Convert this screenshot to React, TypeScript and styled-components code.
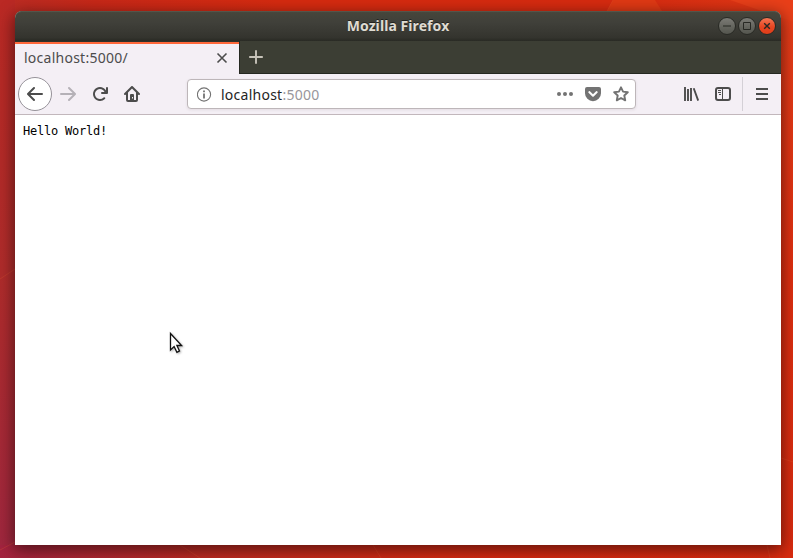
import React from "react";
import styled, { createGlobalStyle } from "styled-components";

const GlobalStyle = createGlobalStyle`
  * { box-sizing: border-box; }
  html, body { margin: 0; padding: 0; }
  body { width: 793px; height: 558px; overflow: hidden; font-family: "Noto Sans", "Open Sans", sans-serif; }
  svg { display: block; flex: none; }
`;

const Desktop = styled.main`
  position: relative;
  width: 793px;
  height: 558px;
  padding: 11px 12px 13px 15px;
  overflow: hidden;
  background: linear-gradient(90deg, #ba2c24 0%, #c82818 12%, #d72b10 35%, #d82b10 80%, #e23916 100%);
`;

const Wallpaper = styled.svg`
  position: absolute;
  inset: 0;
`;

const BrowserWindow = styled.section`
  position: relative;
  display: flex;
  flex-direction: column;
  width: 766px;
  height: 534px;
  border-radius: 7px 7px 0 0;
  background: #fff;
  box-shadow: 0 4px 16px 1px rgba(25, 8, 8, 0.62);
`;

const TitleBar = styled.header`
  display: grid;
  grid-template-columns: 1fr auto 1fr;
  align-items: center;
  height: 30px;
  padding-right: 5px;
  border-radius: 7px 7px 0 0;
  background: linear-gradient(#494940 0, #45453b 7%, #40403a 38%, #34342e 88%, #292a24 100%);
  box-shadow: inset 0 1px #55554a;
`;

const WindowTitle = styled.h1`
  grid-column: 2;
  margin: 0;
  padding-left: 5px;
  color: #dfdbd2;
  font-size: 14px;
  font-weight: 700;
  line-height: 30px;
  letter-spacing: 0.08px;
  text-shadow: 0 -1px #22221e;
`;

const WindowControls = styled.div`
  display: flex;
  justify-content: flex-end;
  gap: 2px;
`;

const ControlButton = styled.button<{ $close?: boolean }>`
  display: grid;
  place-items: center;
  width: 18px;
  height: 18px;
  padding: 0;
  border: 1px solid #292a25;
  border-radius: 50%;
  color: #272823;
  background: ${({ $close }) => $close ? "linear-gradient(#f47755, #e74622 55%, #df3d19)" : "linear-gradient(#7b7b75, #62635c 60%, #55564f)"};
`;

const TabStrip = styled.nav`
  display: flex;
  height: 33px;
  background: #3c3e34;
  border-bottom: 1px solid #252821;
`;

const Tab = styled.div`
  display: flex;
  align-items: center;
  justify-content: space-between;
  width: 225px;
  height: 33px;
  padding: 1px 11px 0 9px;
  color: #4c4c4c;
  background: #f4eff5;
  border-right: 1px solid #252821;
  box-shadow: inset 0 1px #303129, inset 0 3px #ff683b;
  font-size: 14px;
`;

const TabLabel = styled.span`
  padding-bottom: 2px;
  letter-spacing: 0.25px;
`;

const IconButton = styled.button<{ $width?: number; $height?: number; $tone?: string }>`
  display: grid;
  place-items: center;
  width: ${({ $width }) => $width ?? 32}px;
  height: ${({ $height }) => $height ?? 32}px;
  padding: 0;
  border: 0;
  color: ${({ $tone }) => $tone ?? "#4c4c4c"};
  background: transparent;
`;

const Toolbar = styled.div`
  display: flex;
  align-items: center;
  height: 41px;
  padding: 0 3px;
  background: #f4eff5;
  border-bottom: 1px solid #c2b7bc;
`;

const BackButton = styled.button`
  display: grid;
  place-items: center;
  width: 34px;
  height: 34px;
  padding: 0;
  border: 1px solid #969299;
  border-radius: 50%;
  color: #4c4c4c;
  background: #fff;
`;

const Navigation = styled.div`
  display: flex;
  align-items: center;
  width: 169px;
`;

const AddressBar = styled.div`
  display: flex;
  align-items: center;
  width: 449px;
  height: 30px;
  padding: 0 6px 0 9px;
  border: 1px solid #bdb6b9;
  border-radius: 4px;
  background: #fff;
  box-shadow: 0 1px 3px rgba(50, 30, 35, 0.09);
  color: #737373;
`;

const Address = styled.span`
  flex: 1;
  margin-left: 9px;
  padding-top: 2px;
  color: #98969b;
  font-size: 14px;
  line-height: 26px;
  letter-spacing: 0.25px;
`;

const Host = styled.span`
  color: #242424;
`;

const AddressActions = styled.div`
  display: flex;
  gap: 12px;
`;

const ToolbarActions = styled.div`
  display: flex;
  align-items: center;
  margin-left: auto;
`;

const Divider = styled.span`
  width: 1px;
  height: 34px;
  margin: 0 3px;
  background: #d4d0d6;
`;

const Page = styled.article`
  flex: 1;
  padding: 9px 8px 8px;
  background: #fff;
`;

const Output = styled.pre`
  margin: 0;
  color: #000;
  font-family: "DejaVu Sans Mono", monospace;
  font-size: 12px;
  line-height: 15px;
  letter-spacing: -0.224px;
`;

const Pointer = styled.svg`
  position: absolute;
  left: 168px;
  top: 331px;
  filter: drop-shadow(1px 1px 1px rgba(0, 0, 0, 0.3));
`;

const arrowPath = "M15 7H3.414l4.293-4.293a1 1 0 0 0-1.414-1.414l-6 6a1 1 0 0 0 0 1.414l6 6a1 1 0 0 0 1.414-1.414L3.414 9H15a1 1 0 0 0 0-2z";

function Icon({ children }: { children: React.ReactNode }) {
  return <svg width="16" height="16" viewBox="0 0 16 16" fill="currentColor" aria-hidden="true">{children}</svg>;
}

function DesktopWallpaper() {
  return (
    <Wallpaper width="793" height="558" viewBox="0 0 793 558" aria-hidden="true">
      <defs>
        <linearGradient id="leftWall" x2="0" y2="1">
          <stop stopColor="#ba2924" /><stop offset=".5" stopColor="#b02c2b" /><stop offset="1" stopColor="#a0273e" />
        </linearGradient>
        <linearGradient id="floor" x2="1">
          <stop stopColor="#a3233f" /><stop offset=".25" stopColor="#be2a22" /><stop offset=".55" stopColor="#d72a12" /><stop offset="1" stopColor="#dd2b0f" />
        </linearGradient>
        <linearGradient id="rightWall" x2="0" y2="1">
          <stop stopColor="#e83e19" /><stop offset=".5" stopColor="#e02f10" /><stop offset="1" stopColor="#d92b0f" />
        </linearGradient>
      </defs>
      <path d="M0 0H15V545H0z" fill="url(#leftWall)" />
      <path d="M0 545H793V558H0z" fill="url(#floor)" />
      <path d="M781 0H793V558H781z" fill="url(#rightWall)" />
      <path d="M613 0H655L662 11H607z" fill="#e13914" />
      <path d="M730 0H793V22z" fill="#e93f19" />
      <path d="M607 11L613 0M0 279L15 269M781 458L793 462M767 545L770 558M373 545L381 558M180 545L200 558M0 550L15 542" fill="none" stroke="#ed6538" strokeOpacity=".24" />
    </Wallpaper>
  );
}

export default function App() {
  return (
    <>
      <GlobalStyle />
      <Desktop>
        <DesktopWallpaper />
        <BrowserWindow>
          <TitleBar>
            <WindowTitle>Mozilla Firefox</WindowTitle>
            <WindowControls>
              <ControlButton aria-label="Minimize"><Icon><path d="M4 7.5h8v1H4z" /></Icon></ControlButton>
              <ControlButton aria-label="Maximize"><Icon><path d="M4.5 4.5h7v7h-7z" fill="none" stroke="currentColor" /></Icon></ControlButton>
              <ControlButton $close aria-label="Close"><Icon><path d="M5.2 5.2l5.6 5.6m0-5.6l-5.6 5.6" fill="none" stroke="currentColor" strokeWidth="1.4" /></Icon></ControlButton>
            </WindowControls>
          </TitleBar>
          <TabStrip>
            <Tab>
              <TabLabel>localhost:5000/</TabLabel>
              <svg width="12" height="12" viewBox="0 0 12 12" aria-hidden="true"><path d="M1.5 1.5l9 9m0-9l-9 9" fill="none" stroke="currentColor" strokeWidth="1.6" /></svg>
            </Tab>
            <IconButton $tone="#c7c3b9" aria-label="New tab"><Icon><path d="M8 1.2v13.6M1.2 8h13.6" fill="none" stroke="currentColor" strokeWidth="1.9" /></Icon></IconButton>
          </TabStrip>
          <Toolbar>
            <Navigation>
              <BackButton aria-label="Back"><Icon><path d={arrowPath} /></Icon></BackButton>
              <IconButton $tone="#b5b1b7" aria-label="Forward"><Icon><path d={arrowPath} transform="translate(16 0) scale(-1 1)" /></Icon></IconButton>
              <IconButton aria-label="Reload"><Icon><path d="M15 1a1 1 0 0 0-1 1v2.418A6.995 6.995 0 1 0 8 15a6.954 6.954 0 0 0 4.95-2.05 1 1 0 0 0-1.414-1.414A5.019 5.019 0 1 1 12.549 6H10a1 1 0 0 0 0 2h5a1 1 0 0 0 1-1V2a1 1 0 0 0-1-1z" /></Icon></IconButton>
              <IconButton aria-label="Home"><Icon><path fillRule="evenodd" d="M15.707 7.293l-7-7a1 1 0 0 0-1.414 0l-7 7a1 1 0 0 0 1.414 1.414L2 8.414V14a2 2 0 0 0 2 2h8a2 2 0 0 0 2-2V8.414l.293.293a1 1 0 0 0 1.414-1.414zM12 14h-2V9a1 1 0 0 0-1-1H7a1 1 0 0 0-1 1v5H4V6.414l4-4 4 4zM8 11h1v1.5H8z" /></Icon></IconButton>
            </Navigation>
            <AddressBar>
              <svg width="15" height="15" viewBox="0 0 15 15" aria-hidden="true"><circle cx="7" cy="7.5" r="6.6" fill="none" stroke="currentColor" strokeWidth="1.1" /><path d="M6.1 3.5h1.8v1.7H6.1zM6.1 6.4h1.8v5H6.1z" fill="currentColor" /></svg>
              <Address><Host>localhost</Host>:5000</Address>
              <AddressActions>
                <Icon><circle cx="2" cy="8" r="2" /><circle cx="8" cy="8" r="2" /><circle cx="14" cy="8" r="2" /></Icon>
                <Icon><path fillRule="evenodd" d="M2 1h12a2 2 0 0 1 2 2v4.2a8 8 0 0 1-16 0V3a2 2 0 0 1 2-2zm2.9 4.3a1 1 0 0 0-1.4 1.4L7.3 10.4a1 1 0 0 0 1.4 0l3.8-3.7a1 1 0 0 0-1.4-1.4L8 8.3z" /></Icon>
                <Icon><path d="M8 1.3l2.05 4.35 4.75.62-3.5 3.25.9 4.78L8 12l-4.2 2.3.9-4.78-3.5-3.25 4.75-.62z" fill="none" stroke="currentColor" strokeWidth="1.9" strokeLinejoin="round" /></Icon>
              </AddressActions>
            </AddressBar>
            <ToolbarActions>
              <IconButton aria-label="Library"><Icon><path d="M2 1v14M5 3v12M8 2v13M10.7 2.2L15.2 14.6" fill="none" stroke="currentColor" strokeWidth="1.9" /></Icon></IconButton>
              <IconButton aria-label="Sidebars"><Icon><rect x="1" y="2" width="14" height="12" rx="2" fill="none" stroke="currentColor" strokeWidth="2" /><path d="M7.5 2v12M3 4.5h3M3 6.5h3M4 8.5h2" fill="none" stroke="currentColor" strokeWidth="1" /></Icon></IconButton>
              <Divider />
              <IconButton aria-label="Menu"><Icon><path d="M2 2h12v2H2zM2 7h12v2H2zM2 12h12v2H2z" /></Icon></IconButton>
            </ToolbarActions>
          </Toolbar>
          <Page><Output>Hello World!</Output></Page>
        </BrowserWindow>
        <Pointer width="18" height="25" viewBox="0 0 18 25" aria-hidden="true">
          <path d="M2.5 2.5v16.5l3.6-3.5 2.8 5.8 2.6-1.4-2.6-5.4h4.7z" fill="#fff" stroke="#111" strokeWidth="1.3" />
        </Pointer>
      </Desktop>
    </>
  );
}
